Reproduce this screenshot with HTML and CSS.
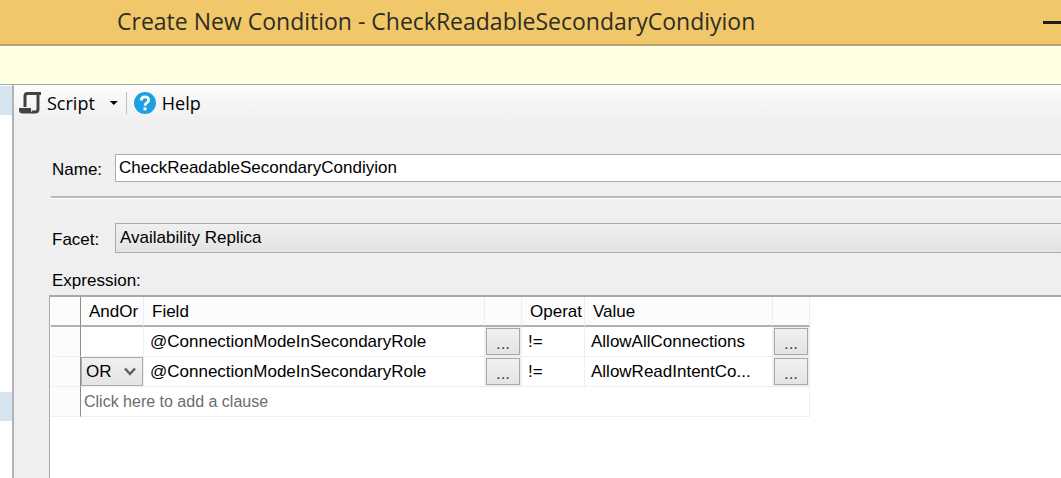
FILE: index.html
```
<!DOCTYPE html>
<html lang="en">

<head>
    <meta charset="UTF-8">
    <meta name="viewport" content="width=device-width, initial-scale=1.0">
    <title>Create New Condition - CheckReadableSecondaryCondiyion</title>
    <link rel="stylesheet" href="styles.css">
</head>

<body>

    <!-- Title bar -->
    <header class="titlebar">
        <h1>Create New Condition - CheckReadableSecondaryCondiyion</h1>
        <button type="button" class="minimize-btn" aria-label="Minimize"></button>
    </header>

    <div class="status-strip"></div>

    <div class="window-body">
        <!-- Page list -->
        <nav class="page-list">
            <div class="page-item"></div>
            <div class="page-item"></div>
        </nav>

        <main class="content">
            <div class="toolbar">
                <button type="button" class="tool-btn">
                    <svg width="24" height="24" viewBox="0 0 24 24" fill="none" stroke="#424242" stroke-width="3">
                        <path d="M6 16V5q0-2.500 2.500-2.500H22M19 3v15q0 3-3 3h-3" />
                        <path d="M0 17h12v2q0 2 2 3.500H4q-4 0-4-3z" fill="#424242" stroke="none" />
                    </svg>
                    Script
                </button>
                <button type="button" class="drop-btn" aria-label="Script options"></button>
                <span class="separator"></span>
                <button type="button" class="tool-btn help-btn">
                    <svg width="22" height="22" viewBox="0 0 22 22">
                        <circle cx="11" cy="11" r="11" fill="#1ba1e2" />
                        <path d="M7.300 8.600V8q.2-3.200 3.700-3.200T14.700 8q0 1.700-1.900 2.900Q11 12 11 13.700" fill="none" stroke="#fff" stroke-width="2.800" />
                        <rect x="9.500" y="15.400" width="3" height="3" fill="#fff" />
                    </svg>
                    Help
                </button>
            </div>

            <form class="condition-form">
                <div class="form-row">
                    <label for="name">Name:</label>
                    <input type="text" id="name" value="CheckReadableSecondaryCondiyion">
                </div>
                <hr>
                <div class="form-row">
                    <label for="facet">Facet:</label>
                    <select id="facet">
                        <option>Availability Replica</option>
                    </select>
                </div>
                <h2 id="expressionLabel">Expression:</h2>
                <div class="expression-box">
                    <table aria-labelledby="expressionLabel">
                        <colgroup>
                            <col class="col-handle">
                            <col class="col-andor">
                            <col class="col-field">
                            <col class="col-btn">
                            <col class="col-operator">
                            <col class="col-value">
                            <col class="col-btn">
                        </colgroup>
                        <thead>
                            <tr>
                                <th class="handle"></th>
                                <th>AndOr</th>
                                <th>Field</th>
                                <th></th>
                                <th><div class="clip">Operator</div></th>
                                <th>Value</th>
                                <th></th>
                            </tr>
                        </thead>
                        <tbody>
                            <tr>
                                <td class="handle"></td>
                                <td></td>
                                <td>@ConnectionModeInSecondaryRole</td>
                                <td class="btn-cell"><button type="button" class="more-btn">...</button></td>
                                <td>!=</td>
                                <td>AllowAllConnections</td>
                                <td class="btn-cell"><button type="button" class="more-btn">...</button></td>
                            </tr>
                            <tr>
                                <td class="handle"></td>
                                <td class="combo-cell">
                                    <div class="combo">
                                        <select aria-label="AndOr">
                                            <option>OR</option>
                                            <option>AND</option>
                                        </select>
                                        <svg width="12" height="9" viewBox="0 0 12 9" fill="none" stroke="#606060" stroke-width="2.500">
                                            <path d="M1 1.500l5 5.500 5-5.500" />
                                        </svg>
                                    </div>
                                </td>
                                <td>@ConnectionModeInSecondaryRole</td>
                                <td class="btn-cell"><button type="button" class="more-btn">...</button></td>
                                <td>!=</td>
                                <td>AllowReadIntentCo...</td>
                                <td class="btn-cell"><button type="button" class="more-btn">...</button></td>
                            </tr>
                            <tr>
                                <td class="handle"></td>
                                <td colspan="6" class="add-clause">Click here to add a clause</td>
                            </tr>
                        </tbody>
                    </table>
                </div>
            </form>
        </main>
    </div>

</body>

</html>
```

FILE: styles.css
```
* {
    box-sizing: border-box;
}

body {
    margin: 0;
    min-height: 100vh;
    display: flex;
    flex-direction: column;
    overflow: hidden;
    background-color: #fff;
    color: #000;
    font: 17px/20px "Liberation Sans", Arial, sans-serif;
}

button,
input,
select {
    font: inherit;
    color: inherit;
    border-radius: 0;
    appearance: none;
}

/* Title bar */
.titlebar {
    display: flex;
    justify-content: space-between;
    align-items: center;
    height: 46px;
    padding-left: 117px;
    background-color: #f0c869;
    border-bottom: 2px solid #b8a377;
}

.titlebar h1 {
    margin: 0;
    padding-bottom: 2px;
    font: 23px/30px "Open Sans", "Noto Sans", sans-serif;
    color: #2f2c25;
    white-space: nowrap;
}

.minimize-btn {
    width: 18px;
    height: 3px;
    padding: 0;
    border: 0;
    background-color: #1e1e1e;
}

.status-strip {
    height: 39px;
    background-color: #ffffe1;
    border-bottom: 1px solid #a8a8ac;
}

.window-body {
    flex: 1;
    display: flex;
}

/* Page list */
.page-list {
    width: 14px;
    padding-top: 1px;
    border-right: 2px solid #b2b2b8;
}

.page-item {
    height: 29px;
    margin-bottom: 277px;
    background-color: #d6e4f2;
}

.page-item:last-child {
    margin-bottom: 0;
}

.content {
    flex: 1;
    min-width: 0;
    display: flex;
    flex-direction: column;
    background-color: #efefef;
}

/* Toolbar */
.toolbar {
    display: flex;
    align-items: center;
    height: 38px;
    padding: 0 0 2px 5px;
    background: linear-gradient(#fcfcfc, #efefef);
}

.tool-btn {
    display: flex;
    align-items: center;
    gap: 4px;
    padding: 0;
    border: 0;
    background: none;
    font: 18px/24px "Open Sans", "Noto Sans", sans-serif;
}

.help-btn {
    gap: 6px;
}

.drop-btn {
    width: 8px;
    height: 4px;
    margin-left: 15px;
    padding: 0;
    border: 0;
    background-color: #000;
    clip-path: polygon(0 0, 100% 0, 50% 100%);
}

.separator {
    width: 1px;
    height: 22px;
    margin: 0 7px 0 8px;
    background-color: #bdbdbd;
}

/* Condition form */
.condition-form {
    flex: 1;
    display: flex;
    flex-direction: column;
    padding: 31px 0 0 35px;
}

.form-row {
    display: flex;
    align-items: center;
    padding-left: 3px;
}

.form-row label {
    width: 63px;
    padding-top: 4px;
}

.form-row input,
.form-row select {
    flex: 1;
    min-width: 0;
    height: 28px;
    padding: 0 3px;
    border: 1px solid #abadb3;
    border-right: 0;
    background-color: #fff;
}

.form-row select {
    height: 30px;
    padding: 0 4px;
    border-color: #acacac;
    background: linear-gradient(#f0f0f0, #e3e3e3);
}

hr {
    width: calc(100% - 2px);
    margin: 14px 0 24px 2px;
    border: 0;
    border-top: 2px solid #b9b9b9;
    border-bottom: 1px solid #fff;
}

h2 {
    margin: 18px 0 4px 3px;
    font-size: 17px;
    font-weight: normal;
}

.expression-box {
    flex: 1;
    padding-left: 1px;
    border: 2px solid #a9a9a9;
    border-width: 2px 0 0 1px;
    background-color: #fff;
}

/* Expression grid */
table {
    width: 759px;
    table-layout: fixed;
    border-collapse: separate;
    border-spacing: 0;
}

.col-handle {
    width: 30px;
}

.col-andor {
    width: 63px;
}

.col-field {
    width: 341px;
}

.col-btn {
    width: 37px;
}

.col-operator {
    width: 63px;
}

.col-value {
    width: 188px;
}

th,
td {
    height: 30px;
    padding: 0 0 0 6px;
    border-right: 1px solid #efefef;
    border-bottom: 1px solid #efefef;
    font-weight: normal;
    text-align: left;
    white-space: nowrap;
    overflow: hidden;
}

th {
    padding: 2px 2px 0 8px;
    background-color: #fcfcfc;
    border-right-color: #e5f0fa;
    border-bottom: 2px solid #adb1b5;
}

.clip {
    overflow: hidden;
}

.handle {
    background-color: #fcfcfc;
    border-right: 1px solid #8c8c8c;
    border-bottom-color: #e8f0f8;
}

th.handle {
    border-bottom-color: #adb1b5;
}

.btn-cell {
    padding: 0 1px;
    background-color: #f0f0f0;
}

.more-btn {
    display: block;
    width: 100%;
    height: 27px;
    padding: 4px 0 0;
    border: 1px solid #a8a8a8;
    background: linear-gradient(#f0f0f0, #e4e4e4);
    color: #444;
    line-height: 20px;
}

.combo-cell {
    padding: 0;
}

.combo {
    display: flex;
    align-items: center;
    height: 29px;
    padding-right: 6px;
    border: 1px solid #acacac;
    background: linear-gradient(#f0f0f0, #e4e4e4);
}

.combo select {
    flex: 1;
    min-width: 0;
    padding: 0 0 0 4px;
    border: 0;
    background: none;
}

.add-clause {
    padding-left: 3px;
    color: #6d6d6d;
    font-size: 16px;
}
```
